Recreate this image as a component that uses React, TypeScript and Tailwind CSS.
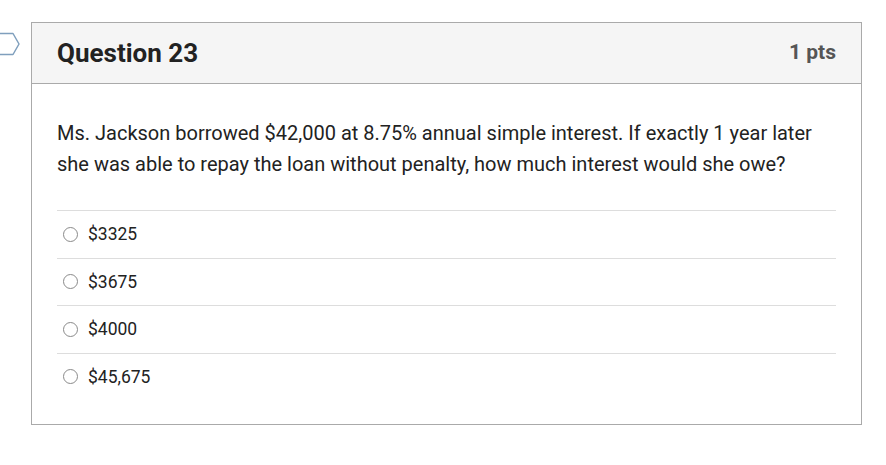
import React from 'react';

const options = ['$3325', '$3675', '$4000', '$45,675'];

const App: React.FC = () => {
  return (
    <div className="relative h-[465px] w-[886px] bg-white pt-[22px] pl-[31px] font-['Roboto',sans-serif] text-[#2d3b45]">
      {/* bookmark flag */}
      <svg className="absolute left-0 top-[32px]" width="22" height="26" viewBox="0 0 22 26">
        <path d="M-2 1.5 H13 L19 12 L13 22.5 H-2" fill="none" stroke="#7f9fbd" strokeWidth="1.5" strokeLinejoin="round" />
      </svg>

      <div className="w-[831px] border border-[#aaaaaa]">
        {/* Header */}
        <div className="flex h-[61px] items-center justify-between border-b border-[#aaaaaa] bg-[#f5f5f5] pl-[25px] pr-[25px]">
          <h2 className="text-[26px] font-bold text-[#222]">Question 23</h2>
          <span className="text-[21px] font-bold text-[#555]">1 pts</span>
        </div>

        {/* Body */}
        <div className="px-[25px] pt-[34px] pb-[24px]">
          <p className="text-[20px] leading-[31px] text-[#222]">
            Ms. Jackson borrowed $42,000 at 8.75% annual simple interest. If exactly 1 year later she was able to repay the loan without penalty, how much interest would she owe?
          </p>

          <div className="mt-[30px]">
            {options.map(o => (
              <div key={o} className="flex h-[47.5px] items-center border-t border-[#dddddd] pl-[6px]">
                <span className="mr-[10px] h-[15px] w-[15px] rounded-full border border-[#8a8a8a]" />
                <span className="text-[17.5px] text-[#222]">{o}</span>
              </div>
            ))}
          </div>
        </div>
      </div>
    </div>
  );
};

export default App;
